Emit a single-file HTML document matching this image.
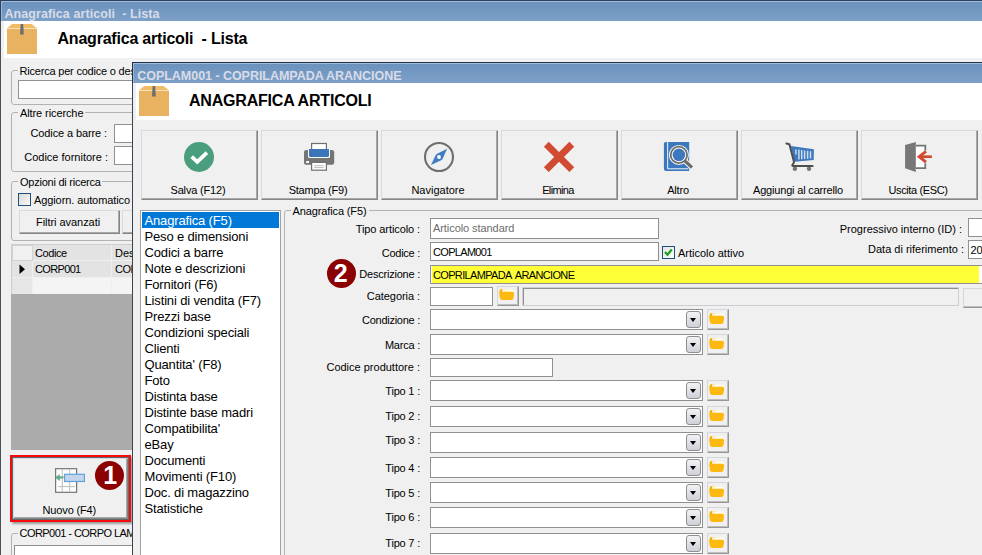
<!DOCTYPE html>
<html lang="it"><head><meta charset="utf-8"><title>Anagrafica articoli</title>
<style>
html,body{margin:0;padding:0;}
body{background:#f0f0f0;width:982px;height:555px;overflow:hidden;position:relative;font-family:"Liberation Sans",sans-serif;font-size:11px;line-height:13px;color:#000;}
div,span.t,svg{position:absolute;box-sizing:border-box;}
span.t{white-space:pre;}
.tb{background:linear-gradient(#6a92bc,#7da0c8);}
.inp{background:#fff;border:1px solid #909090;}
.gb{border:1px solid #b2b2b2;border-radius:3px;}
.gl{background:#f0f0f0;height:13px;}
.btn{background:#f0f0f0;border-top:1px solid #d9d9df;border-left:1px solid #d9d9df;border-right:1px solid #858585;border-bottom:1px solid #858585;box-shadow:inset -1px -1px 0 #a8a8a8;}
.sb{background:#f0f0f0;border-top:1px solid #d6d6da;border-left:1px solid #d6d6da;border-right:1px solid #969696;border-bottom:1px solid #969696;box-shadow:inset -1px -1px 0 #bebebe;}
.dd{border:1px solid #8e8f8f;border-radius:3px;background:linear-gradient(#f2f2f6,#cfd0d8);}
.dd:after{content:"";position:absolute;left:2.7px;top:5.9px;border-left:3.8px solid transparent;border-right:3.8px solid transparent;border-top:4.3px solid #000;}
.li{left:144.5px;font-size:13px;line-height:16px;letter-spacing:-0.15px;}
</style></head>
<body>
<div id="app" style="left:0;top:0;width:982px;height:555px;overflow:hidden;background:#f0f0f0;">
<!-- window 1 -->
<div class="tb" style="left:0px;top:0px;width:982px;height:21px;border-top:1px solid #2c4160;box-shadow:inset 0 1px 0 #a2bcd9;"></div>
<div class="" style="left:0px;top:0px;width:1px;height:555px;background:#4a4f58;"></div>
<div class="" style="left:0px;top:0px;width:1px;height:21px;background:#2c4160;"></div>
<div class="" style="left:1px;top:1px;width:1px;height:20px;background:#9db6d6;"></div>
<div class="" style="left:4px;top:21px;width:978px;height:37px;background:#fff;"></div>
<span class="t" style="top:7px;left:4.5px;font-size:12.5px;line-height:15px;font-weight:bold;color:#d8dce8;letter-spacing:0.08px;">Anagrafica articoli  - Lista</span>
<svg style="left:7px;top:24px" width="30" height="30" viewBox="0 0 30 30"><polygon points="5.2,0 24.6,0 30,4.2 0,4.2" fill="#f1bc66"/><rect x="0" y="4.8" width="30" height="25.2" fill="#e9b260"/><polygon points="13.6,0 16.2,0 16.8,10.6 13,10.6" fill="#6f6f71"/></svg>
<span class="t" style="top:29px;left:57.5px;font-size:16px;line-height:19px;font-weight:bold;letter-spacing:-0.21px;">Anagrafica articoli  - Lista</span>
<div class="gb" style="left:11px;top:70px;width:400px;height:35px;"></div>
<div class="gl" style="left:17.5px;top:65px;width:154px;height:13px;"></div>
<span class="t" style="top:65px;left:19.5px;letter-spacing:-0.2px;">Ricerca per codice o descrizione</span>
<div class="inp" style="left:18px;top:80px;width:300px;height:19px;"></div>
<div class="gb" style="left:11px;top:112px;width:400px;height:60px;"></div>
<div class="gl" style="left:18px;top:107px;width:67px;height:13px;"></div>
<span class="t" style="top:107px;left:20px;letter-spacing:-0.1px;">Altre ricerche</span>
<span class="t" style="top:127px;right:875px;letter-spacing:-0.11px;">Codice a barre :</span>
<div class="inp" style="left:114px;top:124px;width:100px;height:19px;"></div>
<span class="t" style="top:151px;right:874px;">Codice fornitore :</span>
<div class="inp" style="left:114px;top:146px;width:100px;height:19px;"></div>
<div class="gb" style="left:11px;top:181px;width:400px;height:60px;"></div>
<div class="gl" style="left:18px;top:176px;width:84px;height:13px;"></div>
<span class="t" style="top:176px;left:20px;letter-spacing:-0.24px;">Opzioni di ricerca</span>
<div class="" style="left:18px;top:193px;width:13px;height:13px;border:1px solid #1d4f7d;background:linear-gradient(135deg,#d8d8d4,#fafafa);"></div>
<span class="t" style="top:194px;left:34px;letter-spacing:-0.1px;">Aggiorn. automatico</span>
<div class="btn" style="left:19px;top:210px;width:101px;height:24px;"></div>
<span class="t" style="top:216px;left:36px;letter-spacing:-0.05px;">Filtri avanzati</span>
<div class="btn" style="left:122px;top:210px;width:102px;height:24px;"></div>
<div class="" style="left:11px;top:244px;width:420px;height:206px;background:#ababab;"></div>
<div class="" style="left:11px;top:244px;width:420px;height:50px;background:#cdcdcd;"></div>
<div class="" style="left:12px;top:245px;width:420px;height:49px;background:#efefef;"></div>
<div class="" style="left:12px;top:245px;width:21px;height:16px;background:#d2d2d2;"></div>
<div class="" style="left:13px;top:246px;width:19px;height:14px;background:#f0f0f0;"></div>
<div class="" style="left:33px;top:245px;width:78px;height:15px;background:#e3e3e3;"></div>
<div class="" style="left:112px;top:245px;width:100px;height:15px;background:#e3e3e3;"></div>
<div class="" style="left:12px;top:261px;width:20px;height:16px;background:#e3e3e3;"></div>
<div class="" style="left:33px;top:261px;width:78px;height:16px;background:#e3e3e3;"></div>
<div class="" style="left:112px;top:261px;width:100px;height:16px;background:#e3e3e3;"></div>
<div class="" style="left:12px;top:278px;width:20px;height:16px;background:#e6e6e6;"></div>
<div class="" style="left:33px;top:278px;width:78px;height:16px;background:#f4f4f4;"></div>
<div class="" style="left:112px;top:278px;width:100px;height:16px;background:#f4f4f4;"></div>
<span class="t" style="top:247px;left:35px;letter-spacing:-0.4px;">Codice</span>
<span class="t" style="top:247px;left:115px;">Descrizione</span>
<span class="t" style="top:263px;left:35px;letter-spacing:-0.65px;">CORP001</span>
<span class="t" style="top:263px;left:115px;letter-spacing:-0.5px;">CORPO LAMPADA</span>
<svg style="left:19px;top:264px" width="7" height="11" viewBox="0 0 7 11"><polygon points="0.5,0.5 6,5.2 0.5,10" fill="#000"/></svg>
<div class="" style="left:10px;top:455px;width:121px;height:67px;border:2px solid #f60a0e;box-shadow:2px 2px 2px rgba(0,0,0,.35);"></div>
<div class="" style="left:12px;top:457px;width:117px;height:63px;background:#60686a;"></div>
<div class="btn" style="left:13px;top:458px;width:115px;height:61px;"></div>
<svg style="left:54px;top:467px" width="32" height="27" viewBox="0 0 32 27"><rect x="1.6" y="1.7" width="21" height="23.6" fill="#fdfdfd" stroke="#757575" stroke-width="1.2"/><path d="M8.3 2V25M15.7 2V25M2 9.6H22M4 19.6H21" stroke="#bdbdbd" stroke-width="1" fill="none"/><rect x="10.6" y="7.3" width="19.8" height="7.2" fill="#c3d4ec" stroke="#5fa4d8" stroke-width="1.2"/><path d="M9.4 10.6H4" stroke="#5fae8c" stroke-width="2" fill="none"/><polygon points="1,10.6 5.8,7.2 5.8,14" fill="#5fae8c"/></svg>
<span class="t" style="top:504px;left:-80.7px;width:300px;text-align:center;letter-spacing:-0.15px;">Nuovo (F4)</span>
<div class="" style="left:94.8px;top:460.7px;width:29.4px;height:29.4px;border-radius:50%;background:#8b0000;"></div>
<span class="t" style="top:460px;left:-39.7px;width:300px;text-align:center;font-size:25px;line-height:30px;font-weight:bold;color:#fff;">1</span>
<div class="gb" style="left:11px;top:533px;width:400px;height:40px;"></div>
<div class="gl" style="left:17.5px;top:527px;width:134px;height:13px;"></div>
<span class="t" style="top:527px;left:19.5px;letter-spacing:-0.55px;">CORP001 - CORPO LAMPADA</span>
<!-- fix letter spacing of caption -->
<div class="inp" style="left:14px;top:545px;width:300px;height:20px;"></div>

<!-- window 2 -->
<div class="" style="left:132px;top:62px;width:850px;height:493px;background:#f0f0f0;border-left:1px solid #3c4250;border-top:1px solid #1e3350;"></div>
<div class="tb" style="left:133px;top:63px;width:849px;height:20px;box-shadow:inset 0 1px 0 #a2bcd9;"></div>
<div class="" style="left:132px;top:62px;width:1px;height:21px;background:#1e3350;"></div>
<div class="" style="left:133px;top:63px;width:1px;height:20px;background:#9db6d6;"></div>
<div class="" style="left:136px;top:83px;width:846px;height:37px;background:#fff;"></div>
<span class="t" style="top:69px;left:137.3px;font-size:12.5px;line-height:15px;font-weight:bold;color:#d8dce8;letter-spacing:-0.04px;">COPLAM001 - COPRILAMPADA ARANCIONE</span>
<svg style="left:139px;top:86px" width="30" height="30" viewBox="0 0 30 30"><polygon points="5.2,0 24.6,0 30,4.2 0,4.2" fill="#f1bc66"/><rect x="0" y="4.8" width="30" height="25.2" fill="#e9b260"/><polygon points="13.6,0 16.2,0 16.8,10.6 13,10.6" fill="#6f6f71"/></svg>
<span class="t" style="top:91px;left:189px;font-size:16px;line-height:19px;font-weight:bold;letter-spacing:-0.2px;">ANAGRAFICA ARTICOLI</span>
<div class="btn" style="left:141px;top:130px;width:117px;height:70px;"></div>
<span class="t" style="top:184px;left:48px;width:300px;text-align:center;letter-spacing:-0.17px;">Salva (F12)</span>
<div class="btn" style="left:261px;top:130px;width:117px;height:70px;"></div>
<span class="t" style="top:184px;left:168px;width:300px;text-align:center;letter-spacing:-0.22px;">Stampa (F9)</span>
<div class="btn" style="left:381px;top:130px;width:117px;height:70px;"></div>
<span class="t" style="top:184px;left:288px;width:300px;text-align:center;">Navigatore</span>
<div class="btn" style="left:501px;top:130px;width:117px;height:70px;"></div>
<span class="t" style="top:184px;left:408px;width:300px;text-align:center;letter-spacing:-0.63px;">Elimina</span>
<div class="btn" style="left:621px;top:130px;width:117px;height:70px;"></div>
<span class="t" style="top:184px;left:528px;width:300px;text-align:center;letter-spacing:-0.18px;">Altro</span>
<div class="btn" style="left:741px;top:130px;width:117px;height:70px;"></div>
<span class="t" style="top:184px;left:648px;width:300px;text-align:center;letter-spacing:-0.18px;">Aggiungi al carrello</span>
<div class="btn" style="left:861px;top:130px;width:117px;height:70px;"></div>
<span class="t" style="top:184px;left:768px;width:300px;text-align:center;letter-spacing:-0.38px;">Uscita (ESC)</span>
<svg style="left:184px;top:142px" width="30" height="30" viewBox="0 0 30 30"><circle cx="15" cy="15" r="15" fill="#4b9e7d"/><path d="M7.7 14.6L13.3 19.9L22.9 10.7" stroke="#fff" stroke-width="3.7" fill="none"/></svg>
<svg style="left:304px;top:142px" width="31" height="30" viewBox="0 0 31 30"><rect x="7.6" y="1.5" width="14.8" height="8" fill="#fff" stroke="#707070" stroke-width="1.2"/><rect x="0" y="8" width="30.2" height="14.8" rx="2.2" fill="#757575"/><path d="M4 6.9H26V14.4Q26 16 24.4 16H5.6Q4 16 4 14.4Z" fill="#fbfbfb"/><path d="M5 6.9H25V13.5Q25 15 23.5 15H6.5Q5 15 5 13.5Z" fill="#3a75ba"/><rect x="7.6" y="20.4" width="14.8" height="7.8" fill="#fff" stroke="#707070" stroke-width="1.2"/><path d="M10.2 23.7H19.8M10.2 25.6H19.8" stroke="#b4b4b4" stroke-width="0.9"/><rect x="2.2" y="19" width="2.8" height="2" fill="#fff"/></svg>
<svg style="left:423px;top:141px" width="32" height="32" viewBox="0 0 32 32"><circle cx="16" cy="16" r="14" fill="none" stroke="#6f6f6f" stroke-width="2.1"/><polygon points="8,23.9 13.1,13.3 19.2,18.8" fill="#3f7cc4"/><polygon points="24.1,7.8 13.1,13.3 19.2,18.8" fill="#3f7cc4"/><circle cx="16" cy="16" r="1.9" fill="#fff"/></svg>
<svg style="left:543px;top:141px" width="32" height="32" viewBox="0 0 32 32"><path d="M3.3 3.3L28.8 28.6M28.8 3.3L3.3 28.6" stroke="#d14b32" stroke-width="6.9" fill="none"/></svg>
<svg style="left:662px;top:140px" width="34" height="34" viewBox="0 0 34 34"><path d="M3.6 1.9H27.2V31.1H4.4Q1.9 31.1 1.9 28.6V3.6Q1.9 1.9 3.6 1.9Z" fill="#3b78bd"/><path d="M5.65 1.9V28.8H26.4" stroke="#f3f6fa" stroke-width="1" fill="none"/><path d="M22.4 20.4L30.6 28.1" stroke="#f6f6f6" stroke-width="5.4"/><circle cx="16.9" cy="14.9" r="10" fill="#f6f6f6"/><path d="M22.6 20.6L30 27.5" stroke="#6c6c6c" stroke-width="3.2"/><circle cx="16.9" cy="14.9" r="8.2" fill="#fff" stroke="#6c6c6c" stroke-width="1.8"/><circle cx="16.9" cy="14.9" r="6.3" fill="#3b78bd"/></svg>
<svg style="left:783px;top:140px" width="34" height="34" viewBox="0 0 34 34"><polygon points="7.8,5.9 30.9,9.2 30.7,20.1 11.4,21.7" fill="#3b78bd"/><path d="M12.9 9.4V14.4M15.9 9.6V19.4M18.7 10V19.2M21.6 10.4V19M24.6 10.8V18.8M27.5 11.2V18.6" stroke="#cddcef" stroke-width="1.5"/><circle cx="11.9" cy="28.7" r="2.2" fill="#777"/><circle cx="26" cy="28.7" r="2.2" fill="#777"/><path d="M3.4 3.5L6.4 4.3L10.9 21.6Q11.2 23 10 24Q8.4 25.9 10.4 26H29.6" stroke="#4e4e4e" stroke-width="2" fill="none" stroke-linecap="round" stroke-linejoin="round"/></svg>
<svg style="left:903px;top:140px" width="34" height="34" viewBox="0 0 34 34"><rect x="13" y="5.6" width="9.4" height="22.6" fill="#fdfdfd"/><path d="M13 5.6H22.3V10.4M22.3 23.2V28.2H13" stroke="#757575" stroke-width="1.8" fill="none"/><polygon points="2.1,5.1 12.8,2 12.8,32 2.1,28.2" fill="#777"/><path d="M28.9 16.7H17.5" stroke="#d14a30" stroke-width="2.7"/><path d="M23 11.3L16.2 16.7L23 22.2" stroke="#d14a30" stroke-width="3" fill="none"/></svg>
<div class="" style="left:140px;top:210px;width:141px;height:360px;background:#fff;border:1px solid #a2a2a2;"></div>
<div class="" style="left:142px;top:212px;width:137px;height:16px;background:#0078d7;"></div>
<span class="t li" style="top:213px;color:#fff;">Anagrafica (F5)</span>
<span class="t li" style="top:229px;">Peso e dimensioni</span>
<span class="t li" style="top:245px;">Codici a barre</span>
<span class="t li" style="top:261px;">Note e descrizioni</span>
<span class="t li" style="top:277px;">Fornitori (F6)</span>
<span class="t li" style="top:293px;">Listini di vendita (F7)</span>
<span class="t li" style="top:309px;">Prezzi base</span>
<span class="t li" style="top:325px;">Condizioni speciali</span>
<span class="t li" style="top:341px;">Clienti</span>
<span class="t li" style="top:357px;">Quantita&#x27; (F8)</span>
<span class="t li" style="top:373px;">Foto</span>
<span class="t li" style="top:389px;">Distinta base</span>
<span class="t li" style="top:405px;">Distinte base madri</span>
<span class="t li" style="top:421px;">Compatibilita&#x27;</span>
<span class="t li" style="top:437px;">eBay</span>
<span class="t li" style="top:453px;">Documenti</span>
<span class="t li" style="top:469px;">Movimenti (F10)</span>
<span class="t li" style="top:485px;">Doc. di magazzino</span>
<span class="t li" style="top:501px;">Statistiche</span>
<div class="gb" style="left:284px;top:210px;width:720px;height:360px;"></div>
<div class="gl" style="left:291px;top:204px;width:78px;height:13px;"></div>
<span class="t" style="top:205px;left:292.5px;letter-spacing:-0.12px;">Anagrafica (F5)</span>
<span class="t" style="top:223px;right:562px;letter-spacing:-0.09px;">Tipo articolo :</span>
<span class="t" style="top:247px;right:562px;letter-spacing:-0.27px;">Codice :</span>
<span class="t" style="top:268px;right:562px;letter-spacing:-0.22px;">Descrizione :</span>
<span class="t" style="top:290px;right:562px;letter-spacing:-0.06px;">Categoria :</span>
<span class="t" style="top:314px;right:562px;letter-spacing:-0.27px;">Condizione :</span>
<span class="t" style="top:339px;right:562px;letter-spacing:-0.23px;">Marca :</span>
<span class="t" style="top:361px;right:562px;">Codice produttore :</span>
<span class="t" style="top:385px;right:562px;letter-spacing:-0.2px;">Tipo 1 :</span>
<span class="t" style="top:410px;right:562px;letter-spacing:-0.2px;">Tipo 2 :</span>
<span class="t" style="top:434px;right:562px;letter-spacing:-0.2px;">Tipo 3 :</span>
<span class="t" style="top:462px;right:562px;letter-spacing:-0.2px;">Tipo 4 :</span>
<span class="t" style="top:487px;right:562px;letter-spacing:-0.2px;">Tipo 5 :</span>
<span class="t" style="top:511px;right:562px;letter-spacing:-0.2px;">Tipo 6 :</span>
<span class="t" style="top:537px;right:562px;letter-spacing:-0.2px;">Tipo 7 :</span>
<span class="t" style="top:223px;right:20px;">Progressivo interno (ID) :</span>
<span class="t" style="top:243px;right:18px;">Data di riferimento :</span>
<div class="inp" style="left:430px;top:218px;width:229px;height:21px;"></div>
<span class="t" style="top:222px;left:433px;color:#6d6d6d;letter-spacing:-0.07px;">Articolo standard</span>
<div class="inp" style="left:430px;top:242px;width:229px;height:19px;"></div>
<span class="t" style="top:246px;left:433px;letter-spacing:-0.68px;">COPLAM001</span>
<div class="" style="left:662px;top:246px;width:13px;height:13px;border:1px solid #1d4f7d;background:linear-gradient(135deg,#e4e4e0,#fff);"></div>
<svg style="left:663px;top:247px" width="11" height="11" viewBox="0 0 11 11"><path d="M2 5L4.5 7.7L8.7 2.6" stroke="#1fa01f" stroke-width="2.3" fill="none"/></svg>
<span class="t" style="top:247px;left:678px;">Articolo attivo</span>
<div class="inp" style="left:430px;top:265px;width:560px;height:19px;background:#fff;"></div>
<div class="" style="left:432px;top:266px;width:547px;height:17px;background:#ffff38;"></div>
<span class="t" style="top:269px;left:433px;letter-spacing:-0.66px;word-spacing:2px;">COPRILAMPADA ARANCIONE</span>
<div class="inp" style="left:968px;top:218px;width:30px;height:19px;"></div>
<div class="inp" style="left:968px;top:240px;width:30px;height:19px;"></div>
<span class="t" style="top:244px;left:970.5px;">2019</span>
<div class="inp" style="left:430px;top:287px;width:63px;height:19px;"></div>
<div class="sb" style="left:497px;top:286px;width:22px;height:20px;"></div>
<svg style="left:499px;top:288px" width="16" height="13" viewBox="0 0 16 13"><path d="M0.5 3.4Q0.5 0.9 2.6 0.9H5.2Q6.4 0.9 6.8 1.6H8V6H0.5Z" fill="#f5ad00"/><path d="M3.2 1.3H12.8Q14.7 1.3 14.7 3.3V6H3.2Z" fill="#fffbe8"/><path d="M0.3 5.9Q0 3.8 2.2 3.8H13.2Q15.4 3.8 15.1 5.9L14.6 9.8Q14.3 12 12.2 12H3.2Q1.1 12 0.8 9.8Z" fill="#fdb910"/></svg>
<div class="" style="left:522px;top:287px;width:437px;height:19px;background:#f0f0f0;border-top:1px solid #cfcfd4;border-left:1px solid #cfcfd4;border-right:1px solid #cdcdd6;border-bottom:1px solid #cdcdd6;box-shadow:inset 1px 1px 0 #8e8e8e;"></div>
<div class="sb" style="left:963px;top:288px;width:30px;height:20px;"></div>
<div class="inp" style="left:430px;top:309px;width:273px;height:21px;"></div>
<div class="dd" style="left:686px;top:311px;width:15px;height:17px;"></div>
<div class="sb" style="left:707px;top:309px;width:22px;height:21px;"></div>
<svg style="left:709px;top:312px" width="16" height="13" viewBox="0 0 16 13"><path d="M0.5 3.4Q0.5 0.9 2.6 0.9H5.2Q6.4 0.9 6.8 1.6H8V6H0.5Z" fill="#f5ad00"/><path d="M3.2 1.3H12.8Q14.7 1.3 14.7 3.3V6H3.2Z" fill="#fffbe8"/><path d="M0.3 5.9Q0 3.8 2.2 3.8H13.2Q15.4 3.8 15.1 5.9L14.6 9.8Q14.3 12 12.2 12H3.2Q1.1 12 0.8 9.8Z" fill="#fdb910"/></svg>
<div class="inp" style="left:430px;top:334px;width:273px;height:21px;"></div>
<div class="dd" style="left:686px;top:336px;width:15px;height:17px;"></div>
<div class="sb" style="left:707px;top:334px;width:22px;height:21px;"></div>
<svg style="left:709px;top:337px" width="16" height="13" viewBox="0 0 16 13"><path d="M0.5 3.4Q0.5 0.9 2.6 0.9H5.2Q6.4 0.9 6.8 1.6H8V6H0.5Z" fill="#f5ad00"/><path d="M3.2 1.3H12.8Q14.7 1.3 14.7 3.3V6H3.2Z" fill="#fffbe8"/><path d="M0.3 5.9Q0 3.8 2.2 3.8H13.2Q15.4 3.8 15.1 5.9L14.6 9.8Q14.3 12 12.2 12H3.2Q1.1 12 0.8 9.8Z" fill="#fdb910"/></svg>
<div class="inp" style="left:430px;top:380px;width:273px;height:21px;"></div>
<div class="dd" style="left:686px;top:382px;width:15px;height:17px;"></div>
<div class="sb" style="left:707px;top:380px;width:22px;height:21px;"></div>
<svg style="left:709px;top:383px" width="16" height="13" viewBox="0 0 16 13"><path d="M0.5 3.4Q0.5 0.9 2.6 0.9H5.2Q6.4 0.9 6.8 1.6H8V6H0.5Z" fill="#f5ad00"/><path d="M3.2 1.3H12.8Q14.7 1.3 14.7 3.3V6H3.2Z" fill="#fffbe8"/><path d="M0.3 5.9Q0 3.8 2.2 3.8H13.2Q15.4 3.8 15.1 5.9L14.6 9.8Q14.3 12 12.2 12H3.2Q1.1 12 0.8 9.8Z" fill="#fdb910"/></svg>
<div class="inp" style="left:430px;top:406px;width:273px;height:21px;"></div>
<div class="dd" style="left:686px;top:408px;width:15px;height:17px;"></div>
<div class="sb" style="left:707px;top:406px;width:22px;height:21px;"></div>
<svg style="left:709px;top:409px" width="16" height="13" viewBox="0 0 16 13"><path d="M0.5 3.4Q0.5 0.9 2.6 0.9H5.2Q6.4 0.9 6.8 1.6H8V6H0.5Z" fill="#f5ad00"/><path d="M3.2 1.3H12.8Q14.7 1.3 14.7 3.3V6H3.2Z" fill="#fffbe8"/><path d="M0.3 5.9Q0 3.8 2.2 3.8H13.2Q15.4 3.8 15.1 5.9L14.6 9.8Q14.3 12 12.2 12H3.2Q1.1 12 0.8 9.8Z" fill="#fdb910"/></svg>
<div class="inp" style="left:430px;top:432px;width:273px;height:21px;"></div>
<div class="dd" style="left:686px;top:434px;width:15px;height:17px;"></div>
<div class="sb" style="left:707px;top:432px;width:22px;height:21px;"></div>
<svg style="left:709px;top:435px" width="16" height="13" viewBox="0 0 16 13"><path d="M0.5 3.4Q0.5 0.9 2.6 0.9H5.2Q6.4 0.9 6.8 1.6H8V6H0.5Z" fill="#f5ad00"/><path d="M3.2 1.3H12.8Q14.7 1.3 14.7 3.3V6H3.2Z" fill="#fffbe8"/><path d="M0.3 5.9Q0 3.8 2.2 3.8H13.2Q15.4 3.8 15.1 5.9L14.6 9.8Q14.3 12 12.2 12H3.2Q1.1 12 0.8 9.8Z" fill="#fdb910"/></svg>
<div class="inp" style="left:430px;top:457px;width:273px;height:21px;"></div>
<div class="dd" style="left:686px;top:459px;width:15px;height:17px;"></div>
<div class="sb" style="left:707px;top:457px;width:22px;height:21px;"></div>
<svg style="left:709px;top:460px" width="16" height="13" viewBox="0 0 16 13"><path d="M0.5 3.4Q0.5 0.9 2.6 0.9H5.2Q6.4 0.9 6.8 1.6H8V6H0.5Z" fill="#f5ad00"/><path d="M3.2 1.3H12.8Q14.7 1.3 14.7 3.3V6H3.2Z" fill="#fffbe8"/><path d="M0.3 5.9Q0 3.8 2.2 3.8H13.2Q15.4 3.8 15.1 5.9L14.6 9.8Q14.3 12 12.2 12H3.2Q1.1 12 0.8 9.8Z" fill="#fdb910"/></svg>
<div class="inp" style="left:430px;top:482px;width:273px;height:21px;"></div>
<div class="dd" style="left:686px;top:484px;width:15px;height:17px;"></div>
<div class="sb" style="left:707px;top:482px;width:22px;height:21px;"></div>
<svg style="left:709px;top:485px" width="16" height="13" viewBox="0 0 16 13"><path d="M0.5 3.4Q0.5 0.9 2.6 0.9H5.2Q6.4 0.9 6.8 1.6H8V6H0.5Z" fill="#f5ad00"/><path d="M3.2 1.3H12.8Q14.7 1.3 14.7 3.3V6H3.2Z" fill="#fffbe8"/><path d="M0.3 5.9Q0 3.8 2.2 3.8H13.2Q15.4 3.8 15.1 5.9L14.6 9.8Q14.3 12 12.2 12H3.2Q1.1 12 0.8 9.8Z" fill="#fdb910"/></svg>
<div class="inp" style="left:430px;top:507px;width:273px;height:21px;"></div>
<div class="dd" style="left:686px;top:509px;width:15px;height:17px;"></div>
<div class="sb" style="left:707px;top:507px;width:22px;height:21px;"></div>
<svg style="left:709px;top:510px" width="16" height="13" viewBox="0 0 16 13"><path d="M0.5 3.4Q0.5 0.9 2.6 0.9H5.2Q6.4 0.9 6.8 1.6H8V6H0.5Z" fill="#f5ad00"/><path d="M3.2 1.3H12.8Q14.7 1.3 14.7 3.3V6H3.2Z" fill="#fffbe8"/><path d="M0.3 5.9Q0 3.8 2.2 3.8H13.2Q15.4 3.8 15.1 5.9L14.6 9.8Q14.3 12 12.2 12H3.2Q1.1 12 0.8 9.8Z" fill="#fdb910"/></svg>
<div class="inp" style="left:430px;top:533px;width:273px;height:21px;"></div>
<div class="dd" style="left:686px;top:535px;width:15px;height:17px;"></div>
<div class="sb" style="left:707px;top:533px;width:22px;height:21px;"></div>
<svg style="left:709px;top:536px" width="16" height="13" viewBox="0 0 16 13"><path d="M0.5 3.4Q0.5 0.9 2.6 0.9H5.2Q6.4 0.9 6.8 1.6H8V6H0.5Z" fill="#f5ad00"/><path d="M3.2 1.3H12.8Q14.7 1.3 14.7 3.3V6H3.2Z" fill="#fffbe8"/><path d="M0.3 5.9Q0 3.8 2.2 3.8H13.2Q15.4 3.8 15.1 5.9L14.6 9.8Q14.3 12 12.2 12H3.2Q1.1 12 0.8 9.8Z" fill="#fdb910"/></svg>
<div class="inp" style="left:430px;top:358px;width:123px;height:19px;"></div>
<div class="" style="left:326.9px;top:258.7px;width:29.4px;height:29.4px;border-radius:50%;background:#8b0000;"></div>
<span class="t" style="top:258px;left:190.7px;width:300px;text-align:center;font-size:25px;line-height:30px;font-weight:bold;color:#fff;">2</span>
</div>
</body></html>
